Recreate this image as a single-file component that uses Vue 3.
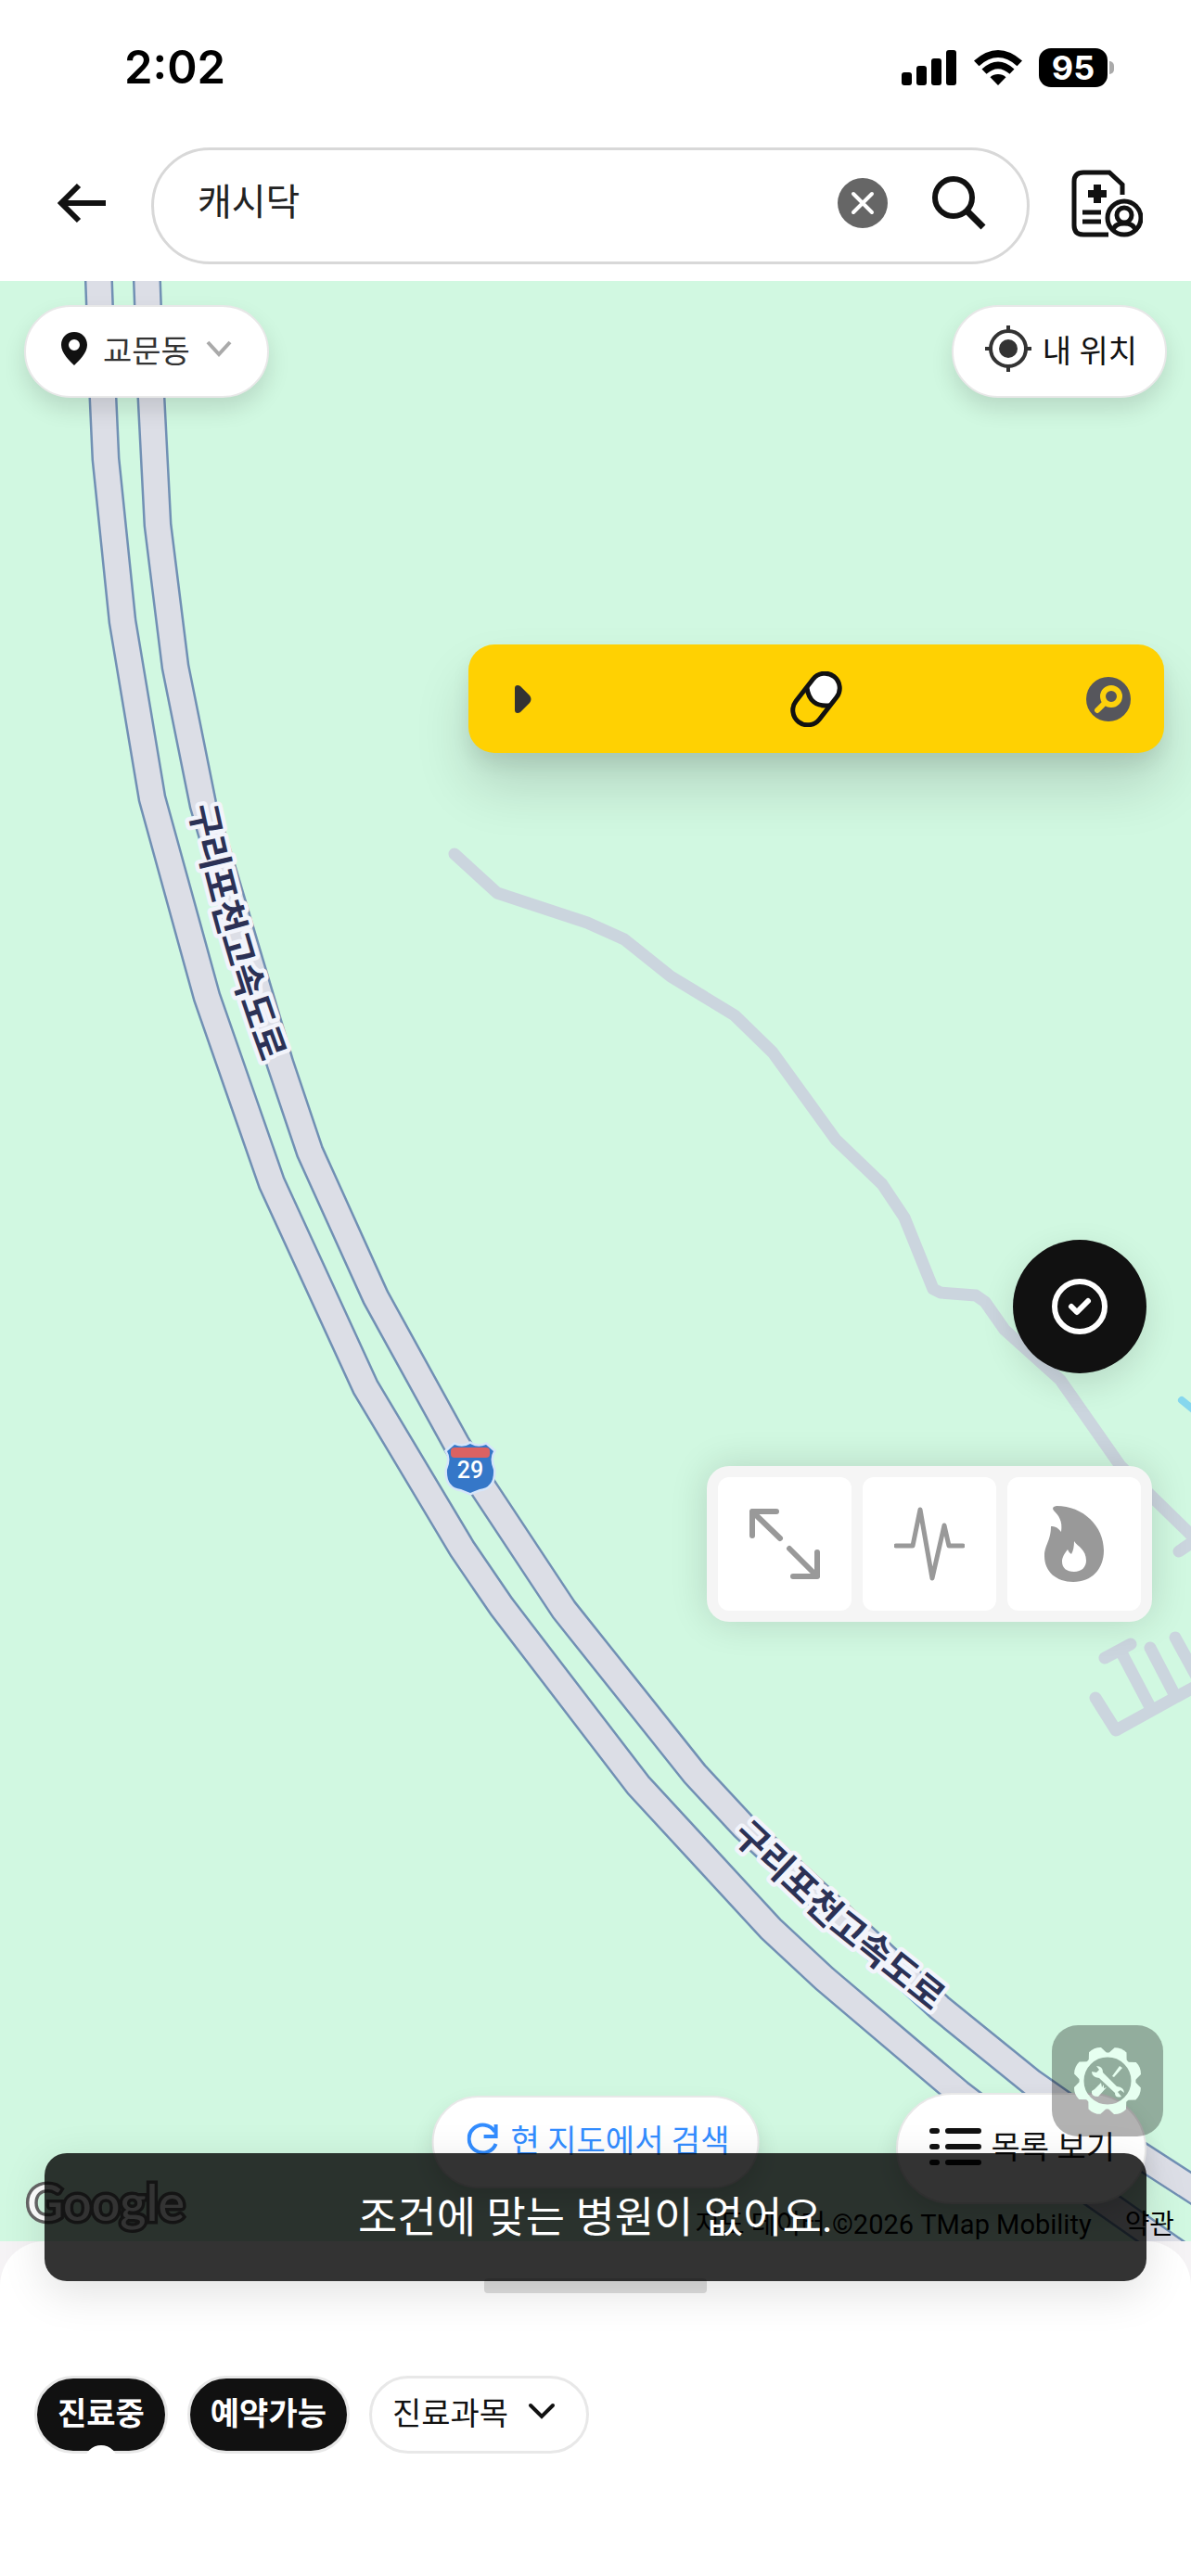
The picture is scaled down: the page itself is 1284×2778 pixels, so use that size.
<script setup>
import { ref } from 'vue'

const keyword = ref('캐시닥')

const filters = ref([
  { label: '진료중', active: true, notch: true },
  { label: '예약가능', active: true },
  { label: '진료과목', active: false, dropdown: true }
])

// map geometry, drawn back to front
const highways = [
  'M106 290L111 429L114 495L132 670L164 861L223 1075L293 1276L394 1496L498 1670L541 1733L688 1925L831 2080L889 2134L1034 2257L1150 2346L1284 2440',
  'M158 290L163 429L170 566L189 719L219 868L302 1147L334 1242L405 1399L492 1557L522 1606L608 1736L749 1913L802 1970L1013 2165L1113 2246L1170 2286L1300 2370'
]
const paths = [
  'M490 921L536 963L633 995L673 1013L723 1053L792 1095L833 1135L901 1229L951 1277L975 1313L1006 1390L1014 1394L1052 1397L1062 1404L1083 1434L1143 1488L1208 1581L1284 1655M1271 1673L1290 1660',
  'M1181 1831L1203 1866L1290 1818M1191 1788L1219 1773M1210 1784L1240 1841M1240 1777L1266 1827M1267 1766L1290 1808'
]
</script>

<template>
  <div class="screen">
    <header>
      <div class="status">
        <span class="time">2:02</span>
        <div class="status-icons">
          <svg width="60" height="38" viewBox="0 0 60 38">
            <rect x="0" y="24" width="11" height="14" rx="3" />
            <rect x="16" y="17" width="11" height="21" rx="3" />
            <rect x="32" y="9" width="11" height="29" rx="3" />
            <rect x="48" y="0" width="11" height="38" rx="3" />
          </svg>
          <svg width="52" height="38" viewBox="0 0 52 38">
            <path d="M26 38L17.500 29.300C22 25 30 25 34.500 29.300Z" />
            <path d="M8.500 20.500Q26 4.500 43.500 20.500L38.500 25.800Q26 14.500 13.500 25.800Z" />
            <path d="M0 11.500Q26 -11.500 52 11.500L46.500 17.200Q26 -1 5.500 17.200Z" />
          </svg>
          <span class="battery">95</span>
        </div>
      </div>
      <div class="search-row">
        <button class="icon-button" aria-label="뒤로">
          <svg width="54" height="44" viewBox="0 0 54 44">
            <path d="M23 3L4 22L23 41M4 22H52" fill="none" stroke="#111" stroke-width="6" />
          </svg>
        </button>
        <form class="search" @submit.prevent>
          <input v-model="keyword" type="text" aria-label="검색어" />
          <button type="button" aria-label="지우기" @click="keyword = ''">
            <svg width="54" height="54" viewBox="0 0 54 54">
              <circle cx="27" cy="27" r="27" fill="#666" />
              <path d="M17 17L37 37M37 17L17 37" stroke="#fff" stroke-width="4" stroke-linecap="round" />
            </svg>
          </button>
          <button aria-label="검색">
            <svg width="58" height="58" viewBox="0 0 58 58">
              <circle cx="23" cy="23" r="20" fill="none" stroke="#111" stroke-width="6" />
              <path d="M38 38L55 55" stroke="#111" stroke-width="7" />
            </svg>
          </button>
        </form>
        <button class="icon-button" aria-label="내 진료 기록">
          <svg width="78" height="74" viewBox="0 0 78 74" fill="none" stroke="#111" stroke-width="5">
            <path d="M56 28V17L42 4H14Q4 4 4 14V61Q4 71 14 71H41" />
            <path d="M29 17V37M19 27H39" stroke-width="8" />
            <path d="M13 47H33M13 57H33" />
            <circle cx="58" cy="53" r="18" />
            <circle cx="58" cy="50" r="8" />
            <path d="M46 67Q47 59 58 59T70 67" />
          </svg>
        </button>
      </div>
    </header>

    <main class="map">
      <svg class="canvas" viewBox="0 303 1284 2114" preserveAspectRatio="xMidYMin slice">
        <g fill="none" stroke="#cbd5de" stroke-width="13" stroke-linecap="round" stroke-linejoin="round">
          <path :d="paths[0]" />
          <path :d="paths[1]" />
          <path d="M1274 1510L1290 1523" stroke="#86d7ee" stroke-width="8" />
        </g>
        <template v-for="d in highways" :key="d">
          <path :d="d" fill="none" stroke="#7190b4" stroke-width="31" />
          <path :d="d" fill="none" stroke="#dcdee6" stroke-width="26" />
        </template>
        <path id="label-upper" d="M204 870Q238 1032 292 1170" fill="none" />
        <path id="label-lower" d="M788 1981L890 2078L1030 2190" fill="none" />
        <text class="road-name"><textPath href="#label-upper">구리포천고속도로</textPath></text>
        <text class="road-name"><textPath href="#label-lower">구리포천고속도로</textPath></text>
        <path d="M482 1565L490 1558Q499 1562 507 1557Q515 1562 524 1558L532 1565Q527 1573 532 1585Q533 1604 517 1606L507 1610L497 1606Q481 1604 482 1585Q487 1573 482 1565Z" fill="#3577c8" stroke="#d5e5fa" stroke-width="5" paint-order="stroke" />
        <rect x="486" y="1561" width="42" height="11" rx="4" fill="#dc6262" />
        <text class="shield" x="507" y="1594">29</text>
        <text class="logo" x="29" y="2395">Google</text>
      </svg>

      <div class="map-top">
        <button class="pill">
          <svg width="28" height="36" viewBox="0 0 28 36">
            <path d="M14 0C6 0 0 6 0 14C0 23 9 31 14 36C19 31 28 23 28 14C28 6 22 0 14 0ZM14 8A6 6 0 0 1 14 20A6 6 0 0 1 14 8Z" fill="#111" fill-rule="evenodd" />
          </svg>
          <span class="area">교문동</span>
          <svg width="28" height="18" viewBox="0 0 28 18">
            <path d="M2 2L14 15L26 2" fill="none" stroke="#aaa" stroke-width="4" />
          </svg>
        </button>
        <button class="pill locate">
          <svg width="50" height="50" viewBox="0 0 50 50">
            <circle cx="25" cy="25" r="19" fill="none" stroke="#333" stroke-width="4" />
            <circle cx="25" cy="25" r="10" fill="#333" />
            <path d="M25 0V7M25 43V50M0 25H7M43 25H50" stroke="#333" stroke-width="4" />
          </svg>
          내 위치
        </button>
      </div>

      <button class="medicine" aria-label="약 찾기">
        <svg width="18" height="32" viewBox="0 0 18 32">
          <path d="M0 4C0 1 3 0 6 2L16 12Q19 16 16 20L6 30C3 32 0 31 0 28Z" fill="#333" />
        </svg>
        <svg width="56" height="60" viewBox="0 0 56 60">
          <g transform="rotate(38 28 30)">
            <rect x="12" y="-1" width="32" height="62" rx="16" fill="#ffd102" />
            <path d="M12 28V15A16 16 0 0 1 44 15V28Q28 42 12 28Z" fill="#fff" />
            <path d="M12 26Q28 42 44 26" fill="none" stroke="#111" stroke-width="5" />
            <rect x="12" y="-1" width="32" height="62" rx="16" fill="none" stroke="#111" stroke-width="5" />
          </g>
        </svg>
        <svg width="48" height="48" viewBox="0 0 48 48">
          <circle cx="24" cy="24" r="24" fill="#56565c" />
          <circle cx="27" cy="21" r="9" fill="none" stroke="#fdd10c" stroke-width="6" />
          <path d="M20 28L12 36" stroke="#fdd10c" stroke-width="6" stroke-linecap="round" />
        </svg>
      </button>

      <button class="confirm" aria-label="확인">
        <svg width="60" height="60" viewBox="0 0 60 60" fill="none" stroke="#fff" stroke-width="6">
          <circle cx="30" cy="30" r="27" />
          <path d="M21 30L27 36L39 24" stroke-linecap="round" stroke-linejoin="round" />
        </svg>
      </button>

      <div class="tools">
        <button aria-label="확대">
          <svg width="76" height="76" viewBox="0 0 76 76" fill="none" stroke="#999" stroke-width="6" stroke-linecap="round" stroke-linejoin="round">
            <path d="M3 29V3H29M3 3L33 32M43 43L73 73M47 73H73V47" />
          </svg>
        </button>
        <button aria-label="증상">
          <svg width="76" height="80" viewBox="0 0 76 80" fill="none" stroke="#999" stroke-width="5" stroke-linecap="round" stroke-linejoin="round">
            <path d="M2 42H20L28 3L41 77L54 20L59 42H74" />
          </svg>
        </button>
        <button aria-label="인기">
          <svg width="64" height="82" viewBox="0 0 64 82">
            <path d="M13 0C42 0 64 22 64 48C64 68 51 82 31 82C13 82 0 71 0 54C0 42 7 38 7 22Q13 21 18 28C20 16 15 10 10 5Q7 1 13 0ZM32 38Q32 47 29 52Q26 50 25 47C20 53 19 57 19 60C19 67 24 71 32 71C40 71 45 66 45 59C45 47 36 44 32 38Z" fill="#999" fill-rule="evenodd" />
          </svg>
        </button>
      </div>

      <button class="pill research">
        <svg width="34" height="38" viewBox="0 -4 34 38">
          <path d="M30 8A15 15 0 1 0 31 21" fill="none" stroke="#338dff" stroke-width="4" />
          <path d="M31 0V13H18" fill="none" stroke="#338dff" stroke-width="4" />
        </svg>
        현 지도에서 검색
      </button>
      <button class="pill list">
        <svg width="56" height="44" viewBox="0 -4 56 44" stroke="#111" stroke-width="6" stroke-linecap="round">
          <path d="M3 3H8M20 3H53M3 20H8M20 20H53M3 37H8M20 37H53" />
        </svg>
        목록 보기
      </button>
      <button class="settings" aria-label="도구 설정">
        <svg width="76" height="76" viewBox="-38 -38 76 76">
          <circle r="28" fill="none" stroke="currentColor" stroke-width="5" />
          <path v-for="n in 8" :key="n" :transform="`rotate(${n * 45 - 22})`" d="M-11 -27L-7 -36Q0 -39 7 -36L11 -27Z" fill="currentColor" />
          <path d="M-17 -10Q-17 -4 -9 -3L8 13Q8 19 15 17L11 12L14 10L18 13Q18 7 10 6L-5 -9Q-5 -16 -12 -16L-9 -12L-12 -9Z" fill="currentColor" />
          <path d="M5 -5L13 -16L16 -14L7 -4ZM-14 9L-7 2L-6 7L-4 4L-4 8L-1 7L-10 17Q-18 17 -17 11Z" fill="currentColor" />
        </svg>
      </button>
      <div class="credits">
        <span>지도 데이터 ©2026 TMap Mobility</span>
        <a href="#terms">약관</a>
      </div>
    </main>

    <section class="sheet">
      <div class="handle"></div>
      <div class="chips">
        <button v-for="filter in filters" :key="filter.label" class="chip" :class="{ active: filter.active, notch: filter.notch }">
          {{ filter.label }}
          <svg v-if="filter.dropdown" width="30" height="20" viewBox="0 0 30 20">
            <path d="M3 4L15 16L27 4" fill="none" stroke="#111" stroke-width="4" stroke-linecap="round" />
          </svg>
        </button>
      </div>
      <div class="toast" role="status">조건에 맞는 병원이 없어요.</div>
    </section>
  </div>
</template>

<style>
body {
  margin: 0;
}
</style>

<style scoped>
.screen {
  display: flex;
  flex-direction: column;
  min-height: 100vh;
  overflow: hidden;
  background: #f5f3f5;
  color: #111;
  font-family: Roboto, 'Noto Sans CJK KR', sans-serif;
  font-size: 34px;
}
header {
  background: #fff;
}
svg {
  display: block;
  flex: none;
}
button {
  padding: 0;
  border: 0;
  background: none;
  color: inherit;
  font: inherit;
}
.status {
  display: flex;
  justify-content: space-between;
  align-items: center;
  height: 98px;
  padding: 24px 90px 0 134px;
}
.time {
  font: 600 49px/60px Inter, sans-serif;
  color: #000;
}
.status-icons {
  display: flex;
  align-items: center;
  gap: 18px;
}
.battery {
  position: relative;
  width: 74px;
  border-radius: 13px;
  background: #000;
  color: #fff;
  font: 700 36px/42px Inter, sans-serif;
  text-align: center;
}
.battery::after {
  content: '';
  position: absolute;
  top: 14px;
  right: -7px;
  width: 5px;
  height: 14px;
  border-radius: 0 5px 5px 0;
  background: #aaa;
}
.search-row {
  display: flex;
  align-items: center;
  height: 126px;
  padding: 37px 52px 18px 62px;
}
.icon-button {
  padding-bottom: 6px;
}
.search {
  display: flex;
  flex: 1;
  align-items: center;
  gap: 48px;
  box-sizing: border-box;
  height: 126px;
  min-width: 0;
  margin: 0 44px 0 47px;
  padding: 0 44px 6px 47px;
  border: 3px solid #d8d8d8;
  border-radius: 63px;
}
.search input {
  flex: 1;
  min-width: 0;
  padding: 0;
  border: 0;
  outline: 0;
  background: none;
  color: #222;
  font: 40px/56px Roboto, 'Noto Sans CJK KR', sans-serif;
}
.map {
  position: relative;
  flex: 1;
  background: #d1f8e1;
}
.canvas {
  position: absolute;
  width: 100%;
  height: 100%;
}
.road-name {
  fill: #2b3155;
  stroke: #f2f4fb;
  stroke-width: 9px;
  stroke-linejoin: round;
  paint-order: stroke;
  font: 700 39px 'Noto Sans CJK KR', sans-serif;
}
.shield {
  fill: #fff;
  font: 500 25px Roboto, sans-serif;
  text-anchor: middle;
}
.logo {
  fill: #fff;
  stroke: #666;
  stroke-width: 7px;
  paint-order: stroke;
  font: 500 54px Lato, sans-serif;
}
.pill {
  display: flex;
  align-items: center;
  box-sizing: border-box;
  height: 100px;
  padding: 0 38px 6px;
  border: 2px solid #e8e8e8;
  border-radius: 50px;
  background: #fff;
  box-shadow: 0 12px 24px rgba(0, 0, 0, 0.12);
  white-space: nowrap;
}
.map-top {
  position: relative;
  display: flex;
  justify-content: space-between;
  padding: 26px;
}
.area {
  margin: 0 17px;
  color: #333;
}
.locate {
  gap: 12px;
  padding: 0 30px 6px 34px;
}
.medicine {
  position: absolute;
  top: 392px;
  right: 29px;
  display: grid;
  grid-template-columns: 1fr auto 1fr;
  align-items: center;
  box-sizing: border-box;
  width: 750px;
  height: 117px;
  padding: 0 36px;
  border-radius: 28px;
  background: #ffd102;
  box-shadow: 0 36px 60px rgba(0, 0, 0, 0.14), 0 12px 20px rgba(0, 0, 0, 0.08);
}
.medicine svg:first-child {
  margin-left: 14px;
}
.medicine svg:last-child {
  justify-self: end;
}
.confirm {
  position: absolute;
  top: 1034px;
  right: 48px;
  display: grid;
  place-items: center;
  width: 144px;
  height: 144px;
  border-radius: 50%;
  background: #111;
  box-shadow: 0 12px 36px rgba(0, 0, 0, 0.12);
}
.tools {
  position: absolute;
  top: 1278px;
  right: 42px;
  display: flex;
  gap: 12px;
  padding: 12px;
  border-radius: 24px;
  background: #f5f5f5;
  box-shadow: 0 0 40px rgba(0, 0, 0, 0.14);
}
.tools button {
  display: grid;
  place-items: center;
  width: 144px;
  height: 144px;
  border-radius: 12px;
  background: #fff;
}
.research {
  position: absolute;
  bottom: 57px;
  left: 50%;
  gap: 13px;
  padding: 0 30px 8px 36px;
  color: #338dff;
  transform: translateX(-50%);
}
.list {
  position: absolute;
  right: 48px;
  bottom: 40px;
  gap: 10px;
  height: 120px;
  padding: 0 32px 8px 34px;
  border-radius: 60px;
}
.settings {
  position: absolute;
  right: 30px;
  bottom: 113px;
  display: grid;
  place-items: center;
  width: 120px;
  height: 120px;
  border-radius: 28px;
  background: rgba(0, 0, 0, 0.3);
  color: #e6fff0;
}
.credits {
  position: absolute;
  right: 18px;
  bottom: 0;
  display: flex;
  gap: 36px;
  color: #000;
  font-size: 29px;
  line-height: 36px;
}
.credits a {
  color: inherit;
  text-decoration: none;
}
.sheet {
  position: relative;
  padding: 40px 37px 132px;
  border-radius: 48px 48px 0 0;
  background: #fff;
}
.handle {
  width: 240px;
  height: 16px;
  margin: 0 auto 89px;
  border-radius: 4px;
  background: #ddd;
}
.chips {
  display: flex;
  gap: 21px;
}
.chip {
  position: relative;
  display: flex;
  align-items: center;
  gap: 21px;
  height: 84px;
  box-sizing: border-box;
  padding: 0 22px 8px;
  border: 3px solid #e8e8e8;
  border-radius: 42px;
  background: #fff;
  white-space: nowrap;
}
.chip.active {
  background: #111;
  color: #fff;
  font-weight: 700;
}
.chip:last-child {
  padding-right: 33px;
}
.notch::after {
  content: '';
  position: absolute;
  bottom: -30px;
  left: 50%;
  width: 36px;
  height: 36px;
  border-radius: 50%;
  background: #fff;
  transform: translateX(-50%);
}
.toast {
  position: absolute;
  right: 48px;
  bottom: 318px;
  left: 48px;
  height: 138px;
  border-radius: 24px;
  background: rgba(0, 0, 0, 0.8);
  box-shadow: 0 12px 48px rgba(0, 0, 0, 0.12);
  color: #fff;
  font-size: 46px;
  line-height: 138px;
  text-align: center;
}
</style>
